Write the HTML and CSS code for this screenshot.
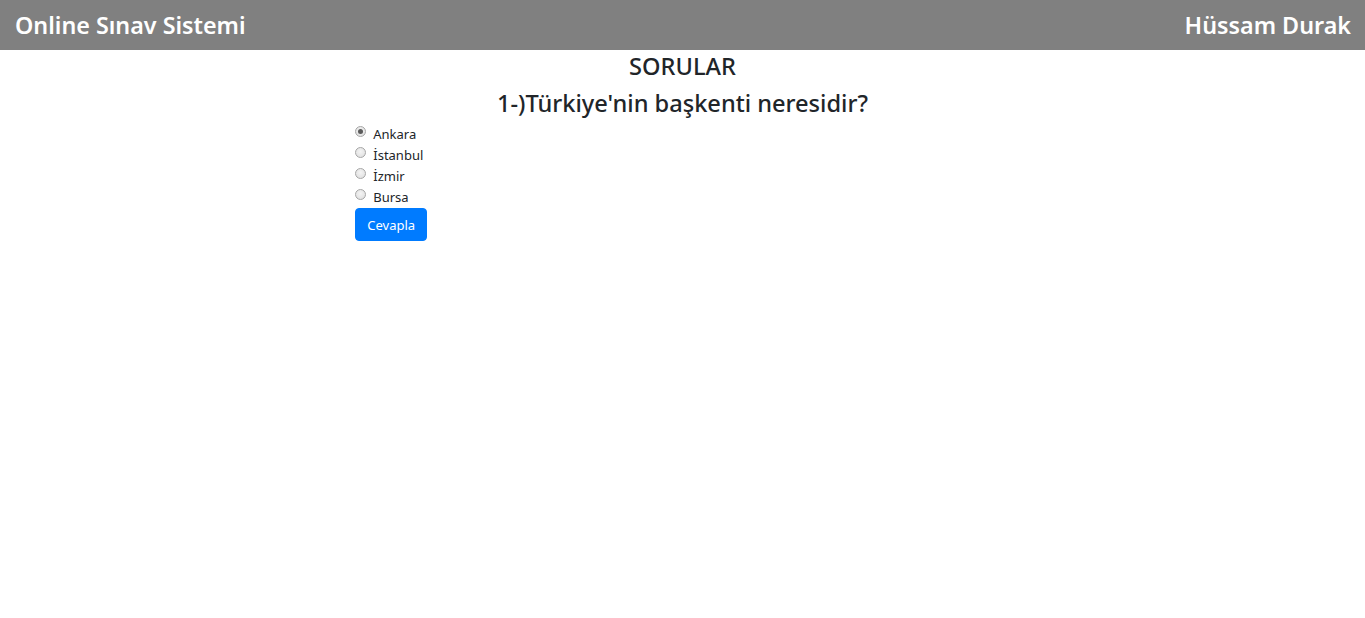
FILE: index.html
```html
<!DOCTYPE html>
<html lang="tr">
<head>
<meta charset="utf-8">
<title>Online Sınav Sistemi</title>
<link rel="stylesheet" href="styles.css">
</head>
<body>
<header class="navbar">
  <span class="brand">Online Sınav Sistemi</span>
  <span class="user">Hüssam Durak</span>
</header>
<main class="content">
  <h4 class="title">SORULAR</h4>
  <h4 class="question">1-)Türkiye'nin başkenti neresidir?</h4>
  <form class="answers">
    <label class="option"><input type="radio" name="q1" checked><span>Ankara</span></label>
    <label class="option"><input type="radio" name="q1"><span>İstanbul</span></label>
    <label class="option"><input type="radio" name="q1"><span>İzmir</span></label>
    <label class="option"><input type="radio" name="q1"><span>Bursa</span></label>
    <button type="button" class="btn">Cevapla</button>
  </form>
</main>
</body>
</html>
```
FILE: styles.css
```css
* { box-sizing: border-box; }
html, body { margin: 0; padding: 0; }
body {
  font-family: "Noto Sans", "Open Sans", sans-serif;
  color: #212529;
  background: #fff;
  font-size: 14px;
}
.navbar {
  height: 50px;
  background: #808080;
  display: flex;
  justify-content: space-between;
  align-items: center;
  padding: 0 14px 0 15px;
  color: #fff;
  font-size: 23.3px;
  font-weight: 600;
}
.content {
  width: 50%;
  margin-left: 25%;
  padding: 0 14px;
}
.title, .question {
  margin: 0;
  text-align: center;
  font-size: 23.6px;
  font-weight: 500;
  line-height: 29px;
}
.title { margin-top: 2px; margin-bottom: 8px; }
.question { margin-bottom: 5px; }
.answers {
  display: flex;
  flex-direction: column;
  align-items: flex-start;
}
.option {
  display: flex;
  align-items: center;
  height: 21px;
  font-size: 13px;
}
.option input {
  -webkit-appearance: none;
  appearance: none;
  margin: 0 7px 0 0;
  width: 11px;
  height: 11px;
  border: 1px solid #a6a6a6;
  border-radius: 50%;
  background: radial-gradient(circle at 50% 40%, #f4f4f4 0%, #dcdcdc 100%);
  position: relative;
  top: -2px;
  display: grid;
  place-items: center;
}
.option input:checked::after {
  content: "";
  width: 5px;
  height: 5px;
  border-radius: 50%;
  background: #5a5a5a;
}
.btn {
  margin-top: 1px;
  font-family: inherit;
  font-size: 13px;
  color: #fff;
  background: #007bff;
  border: 1px solid #007bff;
  border-radius: 4px;
  padding: 0 11px;
  height: 33px;
  cursor: pointer;
}
```
